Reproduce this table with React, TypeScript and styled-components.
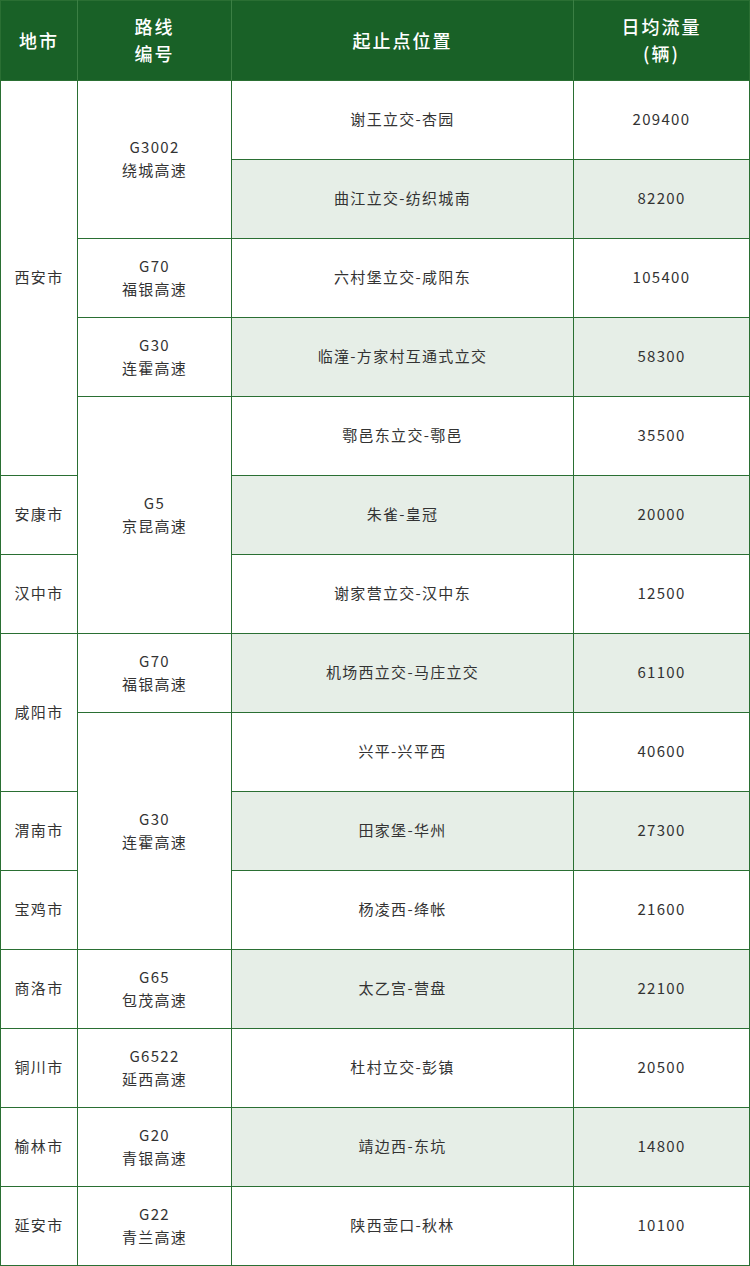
import React from "react";
import styled, { createGlobalStyle } from "styled-components";

const GlobalStyle = createGlobalStyle`
  html, body {
    margin: 0;
    padding: 0;
    background: #ffffff;
  }
  body {
    font-family: "Noto Sans CJK SC", "Noto Sans", sans-serif;
  }
`;

const Table = styled.table`
  width: 750px;
  border-collapse: collapse;
  table-layout: fixed;
  border: 1px solid #2a6f33;
`;

const HeadCell = styled.th`
  height: 78px;
  padding: 0 0 1px;
  background: #196127;
  color: #ffffff;
  font-size: 18px;
  font-weight: 500;
  letter-spacing: 2px;
  line-height: 27px;
  text-align: center;
  vertical-align: middle;
  border-left: 1px solid #3b7f44;
  border-bottom: 1px solid #2a6f33;
  &:first-child {
    border-left: none;
  }
`;

const Cell = styled.td<{ $shaded?: boolean }>`
  height: 75px;
  padding: 0 0 3px;
  background: ${(p) => (p.$shaded ? "#e6eee7" : "#ffffff")};
  color: #333333;
  font-size: 15px;
  letter-spacing: 1.3px;
  line-height: 23px;
  text-align: center;
  vertical-align: middle;
  border: 1px solid #2a6f33;
`;

type Row = {
  city?: string;
  cityRows?: number;
  code?: string;
  road?: string;
  roadRows?: number;
  place: string;
  flow: string;
};

const rows: Row[] = [
  { city: "西安市", cityRows: 5, code: "G3002", road: "绕城高速", roadRows: 2, place: "谢王立交-杏园", flow: "209400" },
  { place: "曲江立交-纺织城南", flow: "82200" },
  { code: "G70", road: "福银高速", place: "六村堡立交-咸阳东", flow: "105400" },
  { code: "G30", road: "连霍高速", place: "临潼-方家村互通式立交", flow: "58300" },
  { code: "G5", road: "京昆高速", roadRows: 3, place: "鄠邑东立交-鄠邑", flow: "35500" },
  { city: "安康市", place: "朱雀-皇冠", flow: "20000" },
  { city: "汉中市", place: "谢家营立交-汉中东", flow: "12500" },
  { city: "咸阳市", cityRows: 2, code: "G70", road: "福银高速", place: "机场西立交-马庄立交", flow: "61100" },
  { code: "G30", road: "连霍高速", roadRows: 3, place: "兴平-兴平西", flow: "40600" },
  { city: "渭南市", place: "田家堡-华州", flow: "27300" },
  { city: "宝鸡市", place: "杨凌西-绛帐", flow: "21600" },
  { city: "商洛市", code: "G65", road: "包茂高速", place: "太乙宫-营盘", flow: "22100" },
  { city: "铜川市", code: "G6522", road: "延西高速", place: "杜村立交-彭镇", flow: "20500" },
  { city: "榆林市", code: "G20", road: "青银高速", place: "靖边西-东坑", flow: "14800" },
  { city: "延安市", code: "G22", road: "青兰高速", place: "陕西壶口-秋林", flow: "10100" },
];

export default function App() {
  return (
    <>
      <GlobalStyle />
      <Table>
        <colgroup>
          <col style={{ width: 77 }} />
          <col style={{ width: 154 }} />
          <col style={{ width: 342 }} />
          <col />
        </colgroup>
        <thead>
          <tr>
            <HeadCell>地市</HeadCell>
            <HeadCell>
              路线
              <br />
              编号
            </HeadCell>
            <HeadCell>起止点位置</HeadCell>
            <HeadCell>
              日均流量
              <br />
              (辆)
            </HeadCell>
          </tr>
        </thead>
        <tbody>
          {rows.map((r, i) => {
            const shaded = i % 2 === 1;
            return (
              <tr key={i}>
                {r.city && <Cell rowSpan={r.cityRows ?? 1}>{r.city}</Cell>}
                {r.code && (
                  <Cell rowSpan={r.roadRows ?? 1}>
                    {r.code}
                    <br />
                    {r.road}
                  </Cell>
                )}
                <Cell $shaded={shaded}>{r.place}</Cell>
                <Cell $shaded={shaded}>{r.flow}</Cell>
              </tr>
            );
          })}
        </tbody>
      </Table>
    </>
  );
}
